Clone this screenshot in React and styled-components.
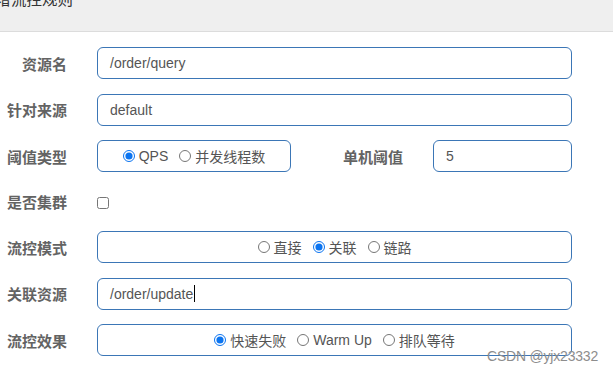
import React from 'react';
import styled, { createGlobalStyle } from 'styled-components';

const GlobalStyle = createGlobalStyle`
  html, body {
    margin: 0;
    padding: 0;
    background: #fff;
    overflow: hidden;
  }
  body {
    font-family: "Liberation Sans", "Noto Sans CJK SC", sans-serif;
  }
`;

const Modal = styled.div`
  position: relative;
  width: 613px;
  height: 373px;
  overflow: hidden;
  background: #fff;
`;

const Header = styled.div`
  height: 31px;
  background: #efefef;
  border-bottom: 1px solid #dcdcdc;
  overflow: hidden;
`;

const Title = styled.h4`
  margin: -8px 0 0 -20px;
  font-size: 15.5px;
  line-height: 16px;
  font-weight: 400;
  color: #333;
  white-space: nowrap;
`;

const Form = styled.div`
  display: flex;
  flex-direction: column;
  gap: 14.5px;
  padding: 15px 41px 0 0;
`;

const Row = styled.div`
  display: flex;
  align-items: center;
  height: ${p => p.$h || 32}px;
`;

const Label = styled.div`
  width: ${p => p.$w || 67}px;
  flex: none;
  text-align: right;
  font-size: 15px;
  font-weight: 700;
  color: #636363;
  margin-right: 30px;
  white-space: nowrap;
`;

const Box = styled.div`
  box-sizing: border-box;
  height: 32px;
  width: ${p => (p.$w ? `${p.$w}px` : 'auto')};
  flex: ${p => (p.$w ? 'none' : '1')};
  border: 1px solid #3b76b6;
  border-radius: 6px;
  display: flex;
  align-items: center;
  justify-content: ${p => (p.$center ? 'center' : 'flex-start')};
  padding: 0 12px;
  font-size: 14px;
  color: #555;
  background: #fff;
`;

const Caret = styled.span`
  display: inline-block;
  width: 1px;
  height: 17px;
  background: #000;
  margin-left: 1px;
`;

const RadioItem = styled.label`
  display: inline-flex;
  align-items: center;
  margin-right: ${p => (p.$last ? 0 : 11)}px;
  font-size: 14px;
  color: #555;
  white-space: nowrap;
`;

const Radio = styled.input.attrs({ type: 'radio' })`
  width: 12px;
  height: 12px;
  margin: 0 4px 0 0;
  accent-color: #0b74f0;
`;

const Check = styled.input.attrs({ type: 'checkbox' })`
  width: 12px;
  height: 12px;
  margin: 3px 0 0 0;
`;

const Watermark = styled.div`
  position: absolute;
  right: 15px;
  bottom: 9px;
  font-size: 14px;
  color: #8d8d8d;
  letter-spacing: -0.2px;
`;

const RadioGroup = ({ name, options, checked }) => (
  <>
    {options.map((opt, i) => (
      <RadioItem key={opt} $last={i === options.length - 1}>
        <Radio name={name} defaultChecked={opt === checked} />
        {opt}
      </RadioItem>
    ))}
  </>
);

export default function App() {
  return (
    <Modal>
      <GlobalStyle />
      <Header>
        <Title>新增流控规则</Title>
      </Header>
      <Form>
        <Row>
          <Label>资源名</Label>
          <Box>/order/query</Box>
        </Row>
        <Row>
          <Label>针对来源</Label>
          <Box>default</Box>
        </Row>
        <Row>
          <Label>阈值类型</Label>
          <Box $w={194} $center>
            <RadioGroup name="grade" options={['QPS', '并发线程数']} checked="QPS" />
          </Box>
          <Label $w={112}>单机阈值</Label>
          <Box>5</Box>
        </Row>
        <Row $h={30}>
          <Label>是否集群</Label>
          <Check />
        </Row>
        <Row>
          <Label>流控模式</Label>
          <Box $center>
            <RadioGroup name="strategy" options={['直接', '关联', '链路']} checked="关联" />
          </Box>
        </Row>
        <Row>
          <Label>关联资源</Label>
          <Box>/order/update<Caret /></Box>
        </Row>
        <Row>
          <Label>流控效果</Label>
          <Box $center>
            <RadioGroup name="behavior" options={['快速失败', 'Warm Up', '排队等待']} checked="快速失败" />
          </Box>
        </Row>
      </Form>
      <Watermark>CSDN @yjx23332</Watermark>
    </Modal>
  );
}
